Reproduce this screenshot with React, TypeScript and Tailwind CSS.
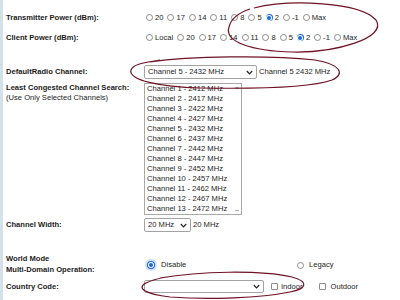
import React from 'react'

const channels = [
  'Channel 1 - 2412 MHz',
  'Channel 2 - 2417 MHz',
  'Channel 3 - 2422 MHz',
  'Channel 4 - 2427 MHz',
  'Channel 5 - 2432 MHz',
  'Channel 6 - 2437 MHz',
  'Channel 7 - 2442 MHz',
  'Channel 8 - 2447 MHz',
  'Channel 9 - 2452 MHz',
  'Channel 10 - 2457 MHz',
  'Channel 11 - 2462 MHz',
  'Channel 12 - 2467 MHz',
  'Channel 13 - 2472 MHz',
]

function Radio({ on, big }: { on?: boolean; big?: boolean }) {
  const size = big ? 'w-[8px] h-[8px]' : 'w-[7px] h-[7px]'
  if (on) {
    return (
      <span className={`${size} rounded-full bg-[#1769e0] flex items-center justify-center shrink-0 ${big ? 'ring-2 ring-[#cfe0fa]' : ''}`}>
        <span className="w-[4px] h-[4px] rounded-full bg-[#1769e0] ring-1 ring-white" />
      </span>
    )
  }
  return <span className={`${size} rounded-full border border-[#8c8c8c] bg-white shrink-0`} />
}

function Chevron() {
  return (
    <svg width="7" height="5" viewBox="0 0 7 5" className="shrink-0">
      <path d="M0.8 1 L3.5 3.8 L6.2 1" fill="none" stroke="#222" strokeWidth="1.2" />
    </svg>
  )
}

function Select({ w, text }: { w: string; text: string }) {
  return (
    <div className={`${w} h-full border border-[#a3a3a3] rounded-[2px] bg-white flex items-center justify-between pl-[3px] pr-[3px]`}>
      <span>{text}</span>
      <Chevron />
    </div>
  )
}

function RadioRow({ items, on }: { items: string[]; on: string }) {
  return (
    <div className="flex items-center gap-[4px] ml-[2px]">
      {items.map((it) => (
        <div key={it} className="flex items-center gap-[2px]">
          <Radio on={it === on} />
          <span>{it}</span>
        </div>
      ))}
    </div>
  )
}

export default function App() {
  return (
    <div className="relative w-[400px] h-[300px] bg-white overflow-hidden flex font-['Liberation_Sans',Arial,sans-serif] text-[7.6px] leading-[10px] text-[#1c1c1c]">
      <div className="w-[3px] h-full bg-[#d5e1e9]" />
      <div className="flex flex-col pl-[3px] pt-[11px]">
        <div className="flex h-[13px] items-center">
          <div className="w-[138px] font-bold">Transmitter Power (dBm):</div>
          <RadioRow items={['20', '17', '14', '11', '8', '5', '2', '-1', 'Max']} on="2" />
        </div>
        <div className="flex h-[13px] items-center mt-[7px]">
          <div className="w-[138px] font-bold">Client Power (dBm):</div>
          <RadioRow items={['Local', '20', '17', '14', '11', '8', '5', '2', '-1', 'Max']} on="2" />
        </div>

        <div className="flex h-[14px] items-center mt-[21px]">
          <div className="w-[138px] font-bold">DefaultRadio Channel:</div>
          <Select w="w-[113px]" text="Channel 5 - 2432 MHz" />
          <span className="ml-[2px]">Channel 5 2432 MHz</span>
        </div>

        <div className="flex mt-[4px]">
          <div className="w-[138px] pt-[-1px]">
            <div className="font-bold">Least Congested Channel Search:</div>
            <div>(Use Only Selected Channels)</div>
          </div>
          <div className="w-[98px] h-[132px] border border-[#a9a9a9] flex bg-white">
            <div className="flex-1 pl-[2px]">
              {channels.map((c) => (
                <div key={c} className="h-[10px] leading-[10px] whitespace-nowrap">{c}</div>
              ))}
            </div>
            <div className="w-[8px] flex flex-col justify-between items-center py-[3px]">
              <span className="w-[4px] h-[1.5px] bg-[#b0b0b0]" />
              <span className="w-[4px] h-[1.5px] bg-[#b0b0b0]" />
            </div>
          </div>
        </div>

        <div className="flex h-[14px] items-center mt-[3px]">
          <div className="w-[138px] font-bold">Channel Width:</div>
          <Select w="w-[47px]" text="20 MHz" />
          <span className="ml-[2px]">20 MHz</span>
        </div>

        <div className="flex h-[22px] items-center mt-[21px]">
          <div className="w-[138px] font-bold leading-[11px]">
            <div>World Mode</div>
            <div>Multi-Domain Operation:</div>
          </div>
          <div className="w-[150px] flex items-center gap-[6px] ml-[3px] mt-[2px]">
            <Radio on big />
            <span>Disable</span>
          </div>
          <div className="flex items-center gap-[5px] mt-[2px]">
            <Radio />
            <span>Legacy</span>
          </div>
        </div>

        <div className="flex h-[13px] items-center mt-[5px]">
          <div className="w-[138px] font-bold">Country Code:</div>
          <Select w="w-[120px]" text="" />
          <div className="flex items-center gap-[3px] ml-[7px]">
            <span className="w-[7px] h-[7px] border border-[#8c8c8c] rounded-[1px] bg-white" />
            <span>Indoor</span>
          </div>
          <div className="flex items-center gap-[5px] ml-[16px]">
            <span className="w-[7px] h-[7px] border border-[#8c8c8c] rounded-[1px] bg-white" />
            <span>Outdoor</span>
          </div>
        </div>
      </div>

      <svg className="absolute inset-0 pointer-events-none" width="400" height="300" viewBox="0 0 400 300">
        <g fill="none" stroke="#6e1224" strokeWidth="1.2">
          <path d="M254 8 C290 -1 360 2 376 20 C388 38 335 53 292 52 C252 51 224 42 229 27 C231 19 238 13 250 9" />
          <path d="M150 62 C190 56 270 55 315 60 C340 64 346 74 332 80 C310 88 260 89 200 88 C160 87 128 80 131 70 C133 65 140 63 160 60" />
          <path d="M160 278 C200 271 260 270 292 277 C310 282 306 289 290 292 C260 298 210 300 170 297 C145 294 136 288 146 283 C150 281 156 279 166 277" />
        </g>
      </svg>
    </div>
  )
}
